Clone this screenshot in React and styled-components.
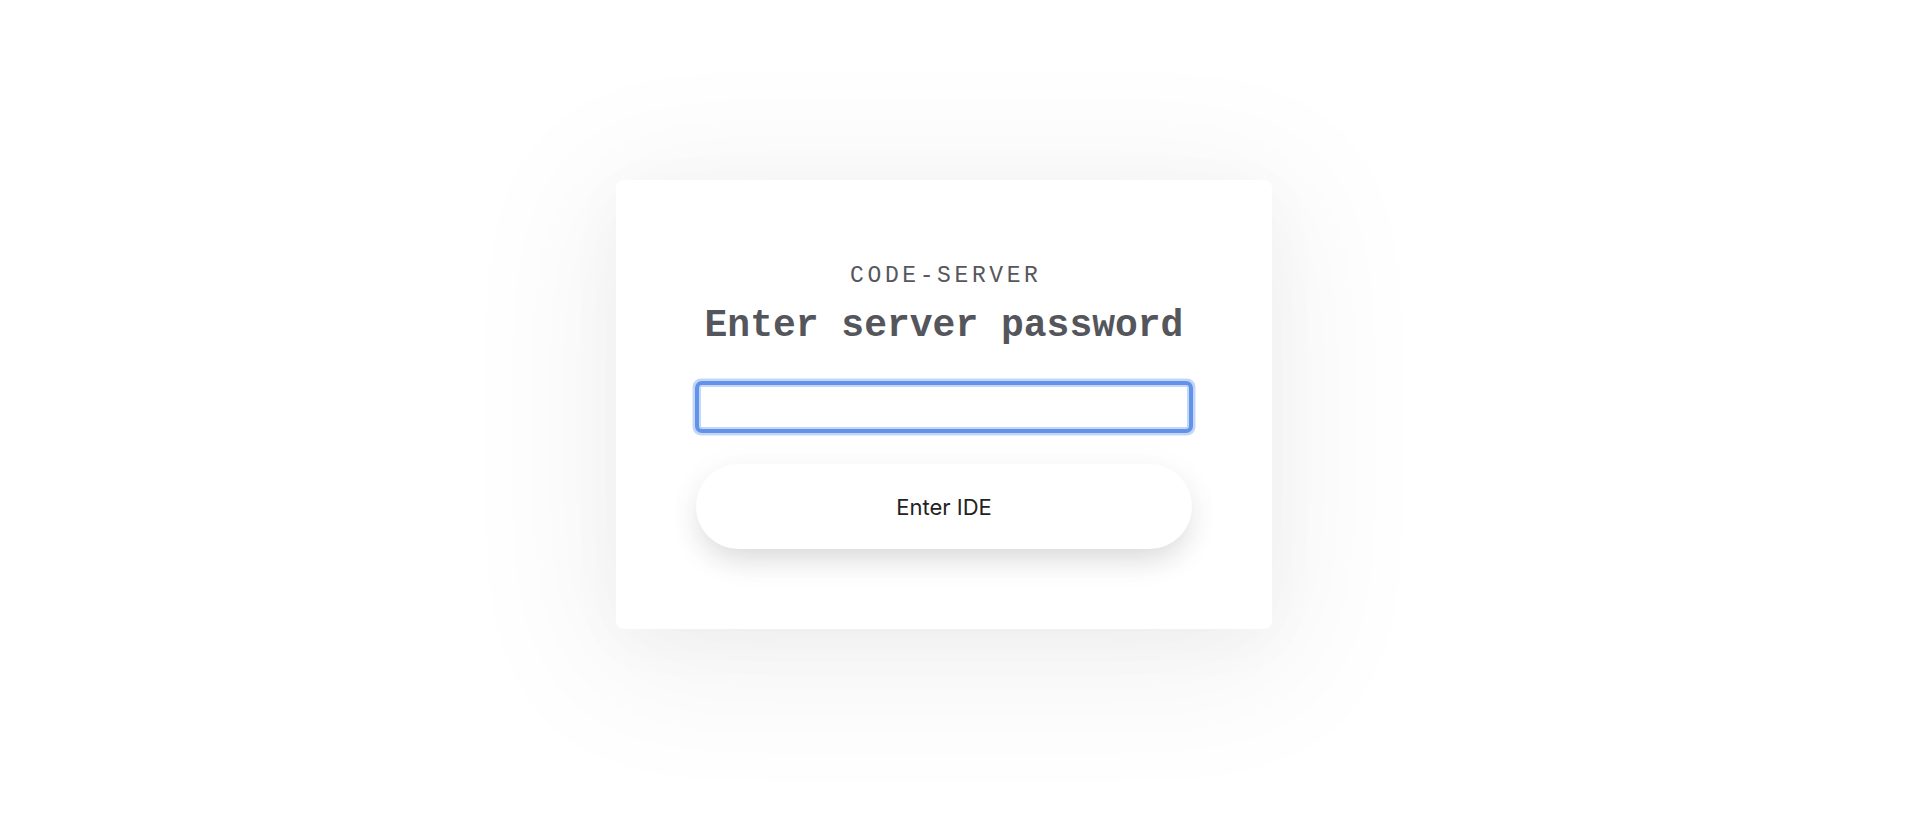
import React from 'react'
import styled, { createGlobalStyle } from 'styled-components'

const GlobalStyle = createGlobalStyle`
    html, body {
        margin: 0;
        padding: 0;
        background: #ffffff;
    }
    * {
        box-sizing: border-box;
    }
`

function App() {
    return (
        <PageStyled>
            <GlobalStyle />
            <Card>
                <Brand>code-server</Brand>
                <Heading>Enter server password</Heading>
                <PasswordInput type="password" aria-label="password" />
                <SubmitButton type="button">Enter IDE</SubmitButton>
            </Card>
        </PageStyled>
    )
}

const PageStyled = styled.main`
    min-height: 100vh;
    display: flex;
    align-items: center;
    justify-content: center;
    padding: 0 34px 19px 0;
`

const Card = styled.section`
    width: 656px;
    height: 449px;
    background: #ffffff;
    border-radius: 8px;
    padding: 82px 80px 80px;
    display: flex;
    flex-direction: column;
    align-items: stretch;
    box-shadow:
        0 22px 150px 24px rgba(0, 0, 0, 0.055),
        0 12px 60px rgba(0, 0, 0, 0.03);
`

const Brand = styled.div`
    font-family: "Courier New", "Liberation Mono", monospace;
    font-size: 23px;
    line-height: 28px;
    letter-spacing: 3.6px;
    text-transform: uppercase;
    text-align: center;
    color: #56575d;
    margin-right: -3.6px;
`

const Heading = styled.h1`
    margin: 14px 0 0;
    font-family: "Courier New", "Liberation Mono", monospace;
    font-size: 38px;
    line-height: 44px;
    font-weight: 700;
    text-align: center;
    color: #54565c;
`

const PasswordInput = styled.input`
    display: block;
    margin: 37px 3px 0;
    height: 44px;
    padding: 0 12px;
    border: 2px solid #c6d7f5;
    border-radius: 3px;
    background: #ffffff;
    outline: none;
    font-size: 18px;
    box-shadow: 0 0 0 4px #6193e8, 0 0 0 6.5px rgba(97, 147, 232, 0.38);
`

const SubmitButton = styled.button`
    margin-top: 35px;
    height: 85px;
    border: none;
    border-radius: 43px;
    background: #ffffff;
    font-family: Inter, "Noto Sans", sans-serif;
    font-size: 22px;
    color: #222222;
    cursor: pointer;
    box-shadow: 0 14px 32px -6px rgba(0, 0, 0, 0.15), 0 4px 44px rgba(0, 0, 0, 0.03);
`

export default App
